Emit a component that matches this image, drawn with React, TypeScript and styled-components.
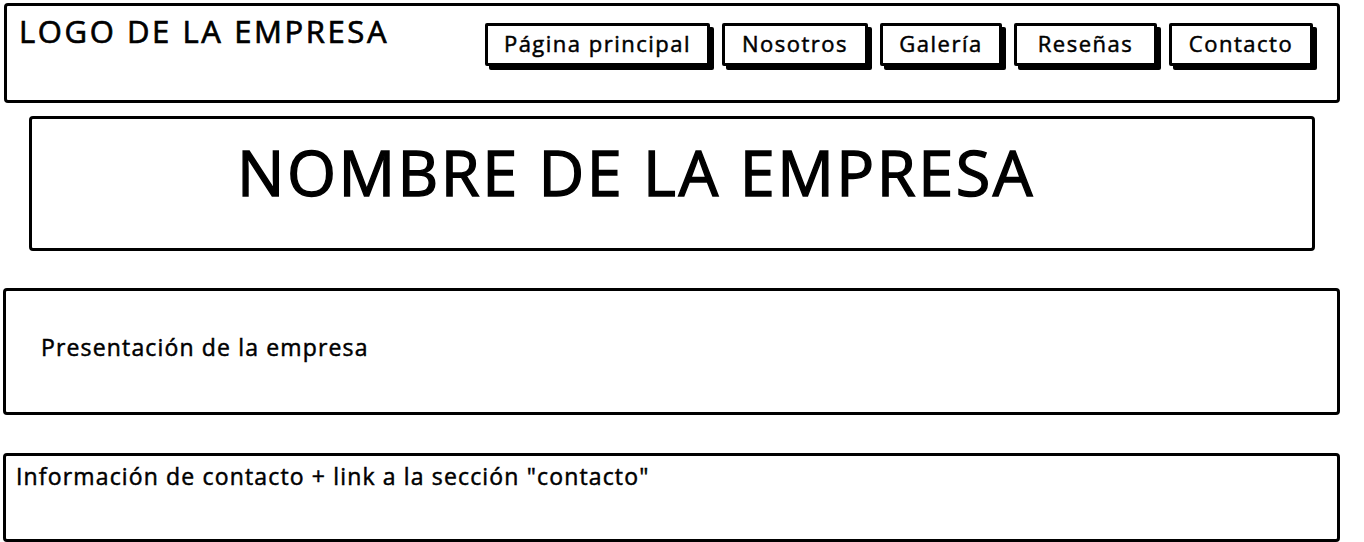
import React from "react";
import styled, { createGlobalStyle } from "styled-components";

const Global = createGlobalStyle`
  html, body { margin: 0; padding: 0; background: #ffffff; }
  body { font-family: "Open Sans", "Noto Sans", sans-serif; color: #000; }
`;

const Page = styled.div`
  width: 1364px;
  height: 542px;
  box-sizing: border-box;
  padding-top: 3px;
  display: flex;
  flex-direction: column;
  align-items: flex-start;
  overflow: hidden;
`;

const Frame = styled.section<{ $left: number; $width: number; $height: number; $top: number }>`
  box-sizing: border-box;
  margin-left: ${(p) => p.$left}px;
  margin-top: ${(p) => p.$top}px;
  width: ${(p) => p.$width}px;
  height: ${(p) => p.$height}px;
  border: 3px solid #000;
  border-radius: 4px;
  background: #fff;
`;

const Header = styled(Frame)`
  display: flex;
  align-items: flex-start;
  padding: 10px 24px 0 12px;
`;

const Logo = styled.div`
  font-size: 31px;
  line-height: 1;
  letter-spacing: 2.6px;
  -webkit-text-stroke: 0.7px #000;
  white-space: nowrap;
`;

const Nav = styled.nav`
  margin-left: auto;
  margin-top: 7px;
  display: flex;
  gap: 12px;
`;

const NavButton = styled.div<{ $w: number }>`
  box-sizing: border-box;
  width: ${(p) => p.$w}px;
  height: 43px;
  border: 3px solid #000;
  border-radius: 2px;
  box-shadow: 4px 4px 0 #000;
  background: #fff;
  display: flex;
  justify-content: center;
  padding-top: 6px;
  font-size: 22px;
  line-height: 1;
  letter-spacing: 1.5px;
  -webkit-text-stroke: 0.5px #000;
  white-space: nowrap;
`;

const TitleBox = styled(Frame)`
  display: flex;
  justify-content: center;
  padding: 21px 72px 0 0;
`;

const Title = styled.h1`
  margin: 0;
  font-weight: 400;
  font-size: 63px;
  line-height: 1;
  letter-spacing: 2.5px;
  -webkit-text-stroke: 1.4px #000;
  white-space: nowrap;
`;

const TextBox = styled(Frame)<{ $padTop: number; $padLeft: number }>`
  padding: ${(p) => p.$padTop}px 0 0 ${(p) => p.$padLeft}px;
`;

const Label = styled.p`
  margin: 0;
  font-size: 23px;
  line-height: 1;
  letter-spacing: 1.15px;
  -webkit-text-stroke: 0.5px #000;
  white-space: nowrap;
`;

const navItems = [
  { label: "Página principal", w: 225 },
  { label: "Nosotros", w: 146 },
  { label: "Galería", w: 122 },
  { label: "Reseñas", w: 143 },
  { label: "Contacto", w: 144 },
];

export default function App() {
  return (
    <>
      <Global />
      <Page>
        <Header $left={4} $width={1336} $height={100} $top={0}>
          <Logo>LOGO DE LA EMPRESA</Logo>
          <Nav>
            {navItems.map((n) => (
              <NavButton key={n.label} $w={n.w}>
                {n.label}
              </NavButton>
            ))}
          </Nav>
        </Header>
        <TitleBox $left={29} $width={1286} $height={135} $top={13}>
          <Title>NOMBRE DE LA EMPRESA</Title>
        </TitleBox>
        <TextBox $left={3} $width={1337} $height={127} $top={37} $padTop={45} $padLeft={35}>
          <Label>Presentación de la empresa</Label>
        </TextBox>
        <TextBox $left={3} $width={1337} $height={89} $top={38} $padTop={9} $padLeft={10}>
          <Label>Información de contacto + link a la sección "contacto"</Label>
        </TextBox>
      </Page>
    </>
  );
}
